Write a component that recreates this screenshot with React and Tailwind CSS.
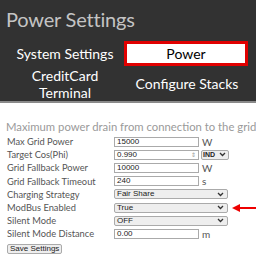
import React from 'react';

const rows = [
  { label: 'Max Grid Power', kind: 'input', value: '15000', unit: 'W' },
  { label: 'Target Cos(Phi)', kind: 'number', value: '0.990' },
  { label: 'Grid Fallback Power', kind: 'input', value: '10000', unit: 'W' },
  { label: 'Grid Fallback Timeout', kind: 'input', value: '240', unit: 's' },
  { label: 'Charging Strategy', kind: 'select', value: 'Fair Share' },
  { label: 'ModBus Enabled', kind: 'select', value: 'True', arrow: true },
  { label: 'Silent Mode', kind: 'select', value: 'OFF' },
  { label: 'Silent Mode Distance', kind: 'input', value: '0.00', unit: 'm' },
];

const Chevron = () => (
  <svg width="7" height="5" viewBox="0 0 7 5" className="shrink-0">
    <path d="M1 1l2.5 2.5L6 1" fill="none" stroke="#333" strokeWidth="1.3" />
  </svg>
);

const boxText = "text-[8px] leading-none text-[#222] font-['Liberation_Sans',sans-serif]";

const Field = ({ row }) => {
  if (row.kind === 'select') {
    return (
      <div className="flex items-center gap-[4px]">
        <div className={`w-[114px] h-[10px] border border-[#aaa] rounded-[2px] bg-[#eee] flex items-center justify-between pl-[2px] pr-[3px] ${boxText}`}>
          <span>{row.value}</span>
          <Chevron />
        </div>
        {row.arrow && (
          <svg width="24" height="8" viewBox="0 0 24 8">
            <path d="M8 4h16" stroke="#e00" strokeWidth="2" />
            <path d="M0 4l8-4v8z" fill="#e00" />
          </svg>
        )}
      </div>
    );
  }
  if (row.kind === 'number') {
    return (
      <div className="flex items-center gap-[2px]">
        <div className={`w-[85px] h-[10px] border border-[#aaa] bg-white flex items-center justify-between pl-[2px] pr-[2px] ${boxText}`}>
          <span>{row.value}</span>
          <span className="text-[6px] text-[#999] leading-none">⇕</span>
        </div>
        <div className={`w-[28px] h-[10px] border border-[#aaa] rounded-[2px] bg-[#eee] flex items-center justify-between pl-[1px] pr-[2px] ${boxText}`}>
          <span className="text-[7px] font-bold">IND</span>
          <Chevron />
        </div>
      </div>
    );
  }
  return (
    <div className="flex items-center gap-[3px]">
      <div className={`w-[85px] h-[10px] border border-[#aaa] bg-white flex items-center pl-[2px] ${boxText}`}>
        {row.value}
      </div>
      <span className="text-[10px] leading-none text-[#555]">{row.unit}</span>
    </div>
  );
};

export default function App() {
  return (
    <div className="w-[256px] h-[258px] overflow-hidden bg-white" style={{ fontFamily: 'Lato, sans-serif' }}>
      <div className="h-[103px] bg-[#323232] border-b-2 border-[#8a8a8a]">
        <h1 className="pl-[6px] pt-[6px] text-[20px] leading-[26px] tracking-[-0.2px] text-[#c4c4c4] whitespace-nowrap">Power Settings</h1>
        <div className="mt-[9px] grid grid-cols-[120px_124px_40px] gap-x-[4px] text-white text-[14px] leading-[17px] text-center whitespace-nowrap">
          <div className="h-[25px] flex items-center justify-center pl-[10px]">System Settings</div>
          <div className="h-[25px] border-[3px] border-[#e00000] bg-white text-black flex items-center justify-center">Power</div>
          <div />
          <div className="pl-[10px] pt-[1px]">CreditCard<br />Terminal</div>
          <div className="flex items-center justify-center pl-[2px]">Configure Stacks</div>
          <div className="flex items-center pl-[5px] text-left">Log</div>
        </div>
      </div>
      <div className="pl-[6px] pt-[17px]">
        <p className="text-[11.3px] leading-[14px] text-[#9a9a9a] whitespace-nowrap">Maximum power drain from connection to the grid*</p>
        <div className="mt-[1px] flex flex-col">
          {rows.map((row) => (
            <div key={row.label} className="h-[13.2px] flex items-center">
              <span className="w-[108px] pl-[1px] text-[9.3px] leading-none text-[#555] whitespace-nowrap">{row.label}</span>
              <Field row={row} />
            </div>
          ))}
        </div>
        <button className={`block mt-[3px] ml-[1px] h-[10px] px-[2px] border border-[#aaa] rounded-[2px] bg-[#eee] ${boxText}`}>Save Settings</button>
      </div>
    </div>
  );
}
